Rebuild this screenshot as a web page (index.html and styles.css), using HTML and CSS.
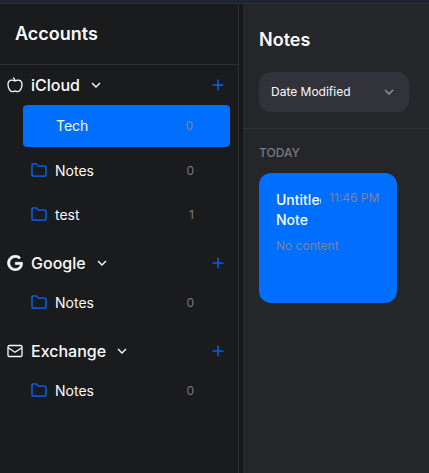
FILE: index.html
```html
<!DOCTYPE html>
<html lang="en">
<head>
<meta charset="utf-8">
<title>Notes</title>
<link rel="stylesheet" href="styles.css">
</head>
<body>
<svg class="symbols" aria-hidden="true">
  <symbol id="chevron" viewBox="0 0 16 16"><path d="M4 6l4 4 4-4"/></symbol>
  <symbol id="plus" viewBox="0 0 16 16"><path d="M8 2.5v11M2.5 8h11"/></symbol>
  <symbol id="folder" viewBox="0 0 16 16"><path d="M1 12.9V3.1q0-1.200 1.200-1.200h2.700q.6 0 1 .5l1.100 1.300q.3.400.9.400h5.900q1.200 0 1.200 1.200v7.600q0 1.200-1.200 1.200H2.200Q1 14.100 1 12.900z"/></symbol>
</svg>
<div class="topbar"></div>
<div class="app">
  <aside class="sidebar">
    <header class="sidebar-header"><h1>Accounts</h1></header>
    <section class="account">
      <div class="account-row first">
        <svg class="brand" viewBox="0 0 16 16"><path d="M8 4C6.900 3.300 5.700 2.900 4.300 3.100 2.200 3.400 1 5 1 7.400c0 3.500 2 7.200 4.400 7.200 1 0 1.600-.6 2.600-.6s1.600.6 2.600.6c2.400 0 4.400-3.700 4.400-7.200 0-2.400-1.200-4-3.300-4.300C10.300 2.900 9.100 3.300 8 4zM8 4C8 2.500 7.400 1.300 6 .9"/></svg>
        <span>iCloud</span>
        <svg class="chevron"><use href="#chevron"/></svg>
        <svg class="plus"><use href="#plus"/></svg>
      </div>
      <div class="folder selected"><span>Tech</span><b>0</b></div>
      <div class="folder"><svg><use href="#folder"/></svg><span>Notes</span><b>0</b></div>
      <div class="folder"><svg><use href="#folder"/></svg><span>test</span><b>1</b></div>
    </section>
    <section class="account">
      <div class="account-row">
        <svg class="brand google" viewBox="-.5 -.5 25 25"><path d="M12.480 10.920v3.280h7.840c-.24 1.840-.853 3.187-1.787 4.133-1.147 1.147-2.933 2.400-6.053 2.400-4.827 0-8.600-3.893-8.600-8.720s3.773-8.720 8.600-8.720c2.600 0 4.507 1.027 5.907 2.347l2.307-2.307C18.747 1.440 16.133 0 12.480 0 5.867 0 .307 5.387.307 12s5.560 12 12.173 12c3.573 0 6.267-1.173 8.373-3.360 2.160-2.160 2.840-5.213 2.840-7.667 0-.76-.053-1.467-.173-2.053z"/></svg>
        <span>Google</span>
        <svg class="chevron"><use href="#chevron"/></svg>
        <svg class="plus"><use href="#plus"/></svg>
      </div>
      <div class="folder"><svg><use href="#folder"/></svg><span>Notes</span><b>0</b></div>
    </section>
    <section class="account">
      <div class="account-row">
        <svg class="brand" viewBox="0 0 16 16"><rect x="1" y="2.5" width="14" height="11" rx="1.3"/><path d="M1.200 4.700L8 9.200l6.800-4.500"/></svg>
        <span>Exchange</span>
        <svg class="chevron"><use href="#chevron"/></svg>
        <svg class="plus"><use href="#plus"/></svg>
      </div>
      <div class="folder"><svg><use href="#folder"/></svg><span>Notes</span><b>0</b></div>
    </section>
  </aside>
  <main class="notes">
    <header class="notes-header">
      <h1>Notes</h1>
      <div class="sort"><span>Date Modified</span><svg><use href="#chevron"/></svg></div>
    </header>
    <h2>TODAY</h2>
    <article class="card">
      <div class="card-head"><h3>Untitled Note</h3><time>11:46 PM</time></div>
      <p>No content</p>
    </article>
  </main>
</div>
</body>
</html>
```

FILE: styles.css
```css
* { box-sizing: border-box; }
body {
  margin: 0;
  height: 473px;
  overflow: hidden;
  background: #18181b;
  color: #fafafa;
  font-family: Inter, sans-serif;
}
h1, h2, h3, p { margin: 0; }
svg { width: 16px; height: 16px; fill: none; stroke: currentColor; stroke-width: 1.4; flex: none; }
.symbols { display: none; }
.topbar { height: 4px; background: #1e2530; border-bottom: 1px solid #303037; }
.app { display: flex; gap: 4px; height: 469px; }
.sidebar { width: 239px; background: #1a1b1d; border-right: 1px solid #303036; }
.sidebar-header { height: 61px; padding: 0 15px; border-bottom: 1px solid #303036; }
h1 { font-size: 18px; font-weight: 600; line-height: 60px; }
.account { padding-bottom: 5px; }
.account-row {
  display: flex;
  align-items: center;
  height: 40px;
  margin-bottom: -1px;
  padding: 0 12px 0 7px;
  font-size: 16px;
  font-weight: 500;
}
.account-row.first { margin-bottom: 0; }
.account-row span { margin: 0 8px; }
.brand { stroke-width: 1.3; }
.google { fill: currentColor; stroke-width: 1; }
.account-row .plus { margin-left: auto; color: #0561df; stroke-width: 1.5; }
.folder {
  display: flex;
  align-items: center;
  gap: 8px;
  height: 42px;
  margin: 0 8px 2px 23px;
  padding: 0 36px 2px 8px;
  font-size: 14px;
}
.folder svg { color: #006fff; stroke-width: 1.3; }
.folder b { margin-left: auto; color: #7a7a83; font-size: 12px; font-weight: 400; }
.folder.selected { padding: 0 37px 2px 33px; margin-bottom: 3px; border-radius: 4px; background: #006fff; }
.notes { flex: 1; background: #252629; }
.notes-header { height: 125px; padding: 20px 16px 0; border-bottom: 1px solid #303036; }
.notes-header h1 { line-height: 32px; }
.sort {
  display: flex;
  align-items: center;
  justify-content: space-between;
  width: 150px;
  height: 40px;
  margin-top: 16px;
  padding: 0 12px;
  border-radius: 12px;
  background: #32323a;
  font-size: 12px;
}
.sort span { padding-bottom: 1px; }
.sort svg { color: #96969c; }
h2 { padding: 16px 16px 12px; color: #7a7a83; font-size: 12px; font-weight: 500; line-height: 16px; }
.card { width: 138px; height: 130px; margin-left: 16px; padding: 17px; border-radius: 12px; background: #006fff; }
.card-head { display: flex; gap: 8px; }
h3 { width: 45px; overflow: hidden; font-size: 14px; font-weight: 500; line-height: 20px; }
time, .card p, .folder.selected b { color: #80848f; }
time, .card p { font-size: 12px; line-height: 16px; }
time { white-space: nowrap; }
.card p { margin-top: 8px; }
```
